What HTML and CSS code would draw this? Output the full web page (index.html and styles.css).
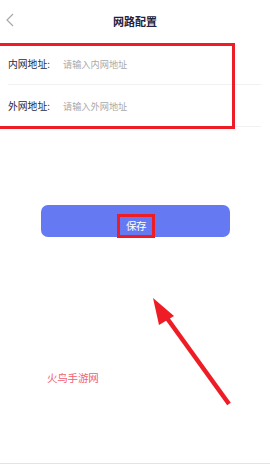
FILE: index.html
```html
<!DOCTYPE html>
<html lang="zh-CN">
<head>
    <meta charset="UTF-8">
    <meta name="viewport" content="width=device-width, initial-scale=1.0">
    <title>网路配置</title>
    <link rel="stylesheet" href="styles.css">
</head>
<body>
    <div class="header">
        <svg class="back" width="8" height="14" viewBox="0 0 8 14">
            <path d="M7 1 L1 7 L7 13" fill="none" stroke="#a8a8a8" stroke-width="1.2"/>
        </svg>
        <h1>网路配置</h1>
    </div>

    <div class="form">
        <div class="row">
            <span class="label">内网地址:</span>
            <span class="placeholder">请输入内网地址</span>
        </div>
        <div class="row">
            <span class="label">外网地址:</span>
            <span class="placeholder">请输入外网地址</span>
        </div>
        <!-- Markierung -->
        <div class="mark mark-form"></div>
    </div>

    <div class="actions">
        <button class="save"><span class="save-text">保存</span></button>
    </div>

    <div class="watermark">火鸟手游网</div>

    <svg class="arrow" width="270" height="464" viewBox="0 0 270 464">
        <line x1="164" y1="314" x2="229" y2="404" stroke="#ee1c25" stroke-width="4.5"/>
        <polygon points="153,298 174,316 159,325" fill="#ee1c25"/>
    </svg>
</body>
</html>
```

FILE: styles.css
```css
body {
    font-family: "Noto Sans CJK SC", "Noto Sans", sans-serif;
    background-color: #fff;
    margin: 0;
    padding: 0;
    width: 270px;
    height: 464px;
    position: relative;
    overflow: hidden;
    border-bottom: 1px solid #e4e4e4;
    box-sizing: border-box;
}

.header {
    height: 43px;
    display: flex;
    align-items: center;
    justify-content: center;
    position: relative;
}

.back {
    position: absolute;
    left: 6px;
    top: 13px;
}

.header h1 {
    font-size: 11px;
    font-weight: bold;
    color: #1e2140;
    margin: 0;
    padding-bottom: 2px;
}

.form {
    position: relative;
    padding-left: 8px;
    margin-right: 9px;
}

.row {
    height: 41px;
    display: flex;
    align-items: center;
    border-bottom: 1px solid #f1f1f1;
}

.label {
    width: 55px;
    font-size: 9.8px;
    color: #262944;
}

.placeholder {
    font-size: 9.2px;
    color: #a9a9a9;
}

.mark {
    position: absolute;
    border: 3.5px solid #ee1c25;
    box-sizing: border-box;
}

.mark-form {
    left: -5px;
    top: 0;
    width: 240px;
    height: 86px;
}

.actions {
    padding: 78px 40px 0 41px;
}

.save {
    width: 189px;
    height: 32px;
    border: none;
    border-radius: 7px;
    background-color: #6579f2;
    display: flex;
    align-items: center;
    justify-content: center;
    padding: 0;
}

.save-text {
    font-family: inherit;
    font-size: 10.5px;
    color: #fff;
    border: 3.5px solid #ee1c25;
    padding: 2px 6px 2px 6px;
    margin-top: 9px;
    line-height: 14px;
}

.watermark {
    font-size: 10.5px;
    color: #f06070;
    padding: 133px 0 0 47px;
    letter-spacing: -0.2px;
}

.arrow {
    position: absolute;
    left: 0;
    top: 0;
}
```
